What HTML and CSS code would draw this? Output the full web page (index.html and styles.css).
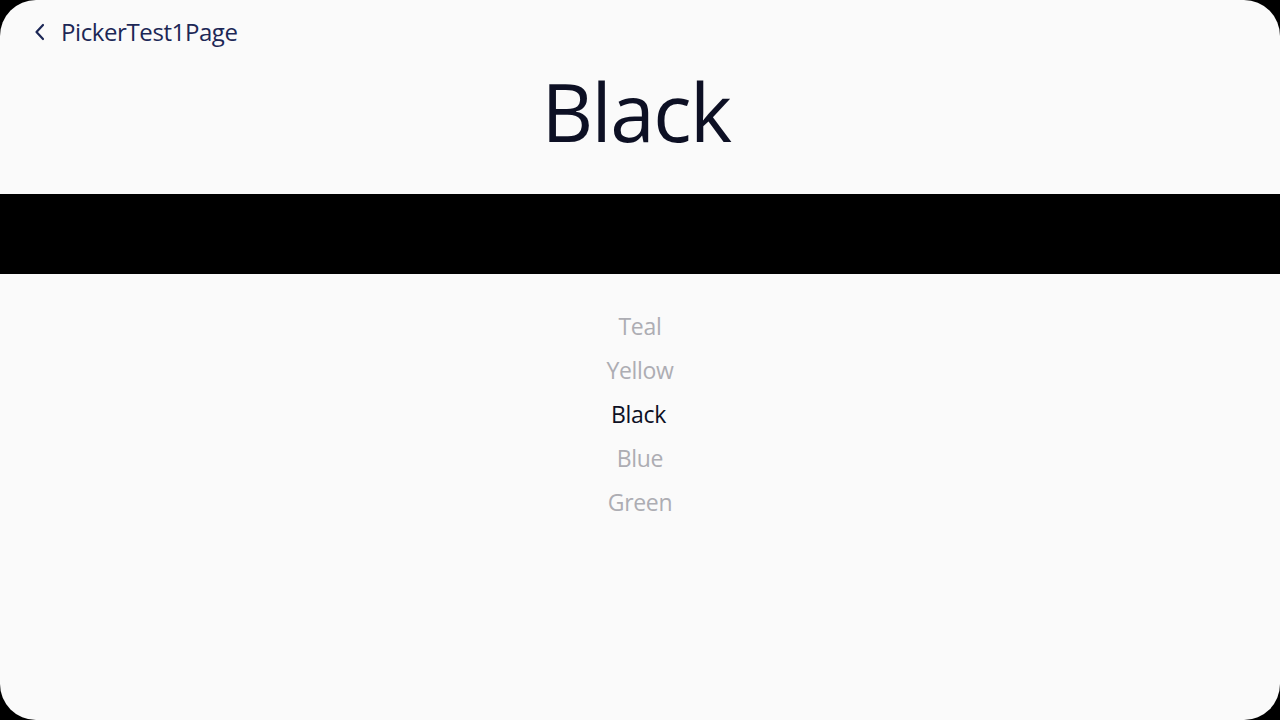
FILE: index.html
```html
<!DOCTYPE html>
<html>
<head>
<meta charset="utf-8">
<link rel="stylesheet" href="styles.css">
</head>
<body>
<div class="screen">
  <header class="appbar">
    <svg class="back" width="14" height="20" viewBox="0 0 14 20"><path d="M10 3 L3.5 10 L10 17" fill="none" stroke="#1c2756" stroke-width="2.2" stroke-linecap="round" stroke-linejoin="round"/></svg>
    <span class="title">PickerTest1Page</span>
  </header>
  <h1 class="selected">Black</h1>
  <div class="swatch"></div>
  <ul class="picker">
    <li>Teal</li>
    <li>Yellow</li>
    <li class="active">Black</li>
    <li>Blue</li>
    <li>Green</li>
  </ul>
</div>
</body>
</html>
```
FILE: styles.css
```css
html, body { margin: 0; padding: 0; background: #000; }
body { width: 1280px; height: 720px; overflow: hidden; font-family: "Open Sans", "Noto Sans", sans-serif; }
.screen {
  width: 1280px; height: 720px; background: #fafafa; border-radius: 36px;
  overflow: hidden; display: flex; flex-direction: column;
}
.appbar { display: flex; align-items: center; height: 63px; padding-left: 33px; gap: 14px; }
.back { display: block; }
.title { font-size: 24px; color: #1c2756; letter-spacing: -0.4px; padding-bottom: 1px; }
.selected {
  margin: 0; height: 131px; display: flex; align-items: center; justify-content: center;
  font-weight: 400; font-size: 80px; color: #0d1024; letter-spacing: -1.5px;
  padding-bottom: 36px; padding-right: 8px; box-sizing: border-box;
}
.swatch { height: 80px; background: #000; }
.picker { list-style: none; margin: 0; padding: 30px 0 0; display: flex; flex-direction: column; align-items: center; }
.picker li { height: 44px; line-height: 44px; font-size: 23px; color: #adadb3; letter-spacing: -0.3px; }
.picker li.active { color: #0d1024; margin-right: 3px; }
```
